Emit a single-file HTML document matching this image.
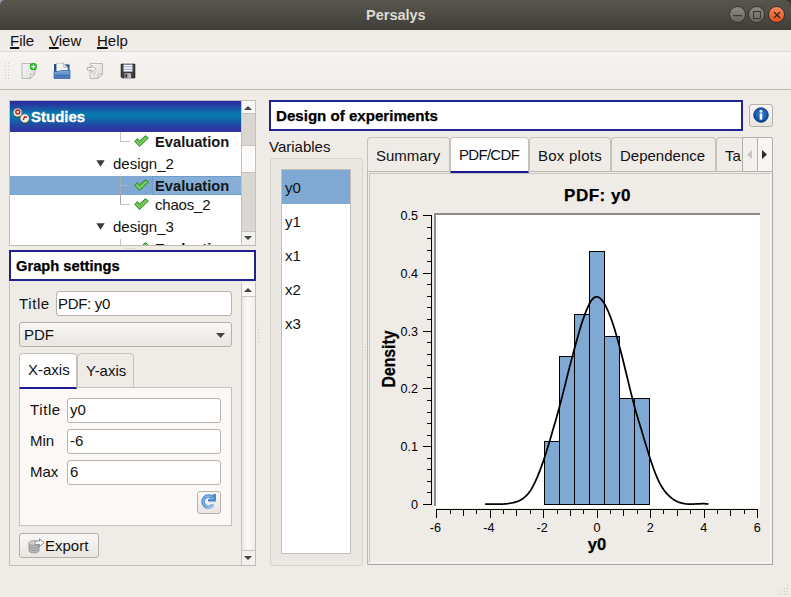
<!DOCTYPE html>
<html>
<head>
<meta charset="utf-8">
<title>Persalys</title>
<style>
html,body{margin:0;padding:0;}
body{width:791px;height:597px;overflow:hidden;background:#efebe7;font-family:"Liberation Sans",sans-serif;font-size:15px;color:#111;position:relative;}
.abs{position:absolute;box-sizing:border-box;}
.t{position:absolute;white-space:nowrap;line-height:1;margin-top:1px;}
.b{font-weight:bold;color:#000;-webkit-text-stroke:0.25px #000;}
#titlebar{left:0;top:0;width:791px;height:30px;background:linear-gradient(#58554d 0%,#504d46 40%,#3f3e39 100%);border-top-left-radius:5px;border-top-right-radius:7px;}
#titlebar .t{color:#dfdbd2;font-weight:bold;font-size:14.5px;}
.wb{position:absolute;width:17px;height:17px;border-radius:50%;box-sizing:border-box;border:1px solid #33322e;}
.input{position:absolute;box-sizing:border-box;background:#fff;border:1px solid #b8b3ac;border-radius:3px;}
.btn{position:absolute;box-sizing:border-box;border:1px solid #b5b0a9;border-radius:3px;background:linear-gradient(#f9f8f6,#e9e5e0);}
.tab{position:absolute;box-sizing:border-box;border:1px solid #c6c1ba;border-bottom:none;border-radius:4px 4px 0 0;background:#efebe7;}
.tab.sel{background:#fff;border-bottom:2px solid #1c1c8e;}
.sbar{position:absolute;box-sizing:border-box;background:#d8d5d0;border:1px solid #c3beb8;}
.line{position:absolute;background:#c4c4c4;}
#gsp .t{margin-top:-1px;}
u{text-decoration-thickness:1.5px;text-underline-offset:0.5px;}
.tb{-webkit-text-stroke:0;color:#151515;}
</style>
</head>
<body>
<!-- title bar -->
<div class="abs" style="left:780px;top:0;width:11px;height:10px;background:#36352f;"></div>
<div class="abs" style="left:0;top:0;width:4px;height:4px;background:#8d9ab0;"></div>
<div id="titlebar" class="abs">
  <div class="t" style="left:366px;top:7px;">Persalys</div>
  <div class="wb" style="left:729px;top:6px;background:linear-gradient(#8d8a83,#69665f);"></div>
  <div class="wb" style="left:748px;top:6px;background:linear-gradient(#8d8a83,#69665f);"></div>
  <div class="wb" style="left:768px;top:6px;background:linear-gradient(#f28a62,#e2521b);border-color:#3a2a22;"></div>
  <svg class="abs" style="left:728px;top:5px;" width="60" height="20" viewBox="728 5 60 20">
    <rect x="733" y="15" width="9" height="1.2" fill="#3b3a36"/>
    <rect x="753.5" y="11.5" width="7" height="7" fill="none" stroke="#3b3a36" stroke-width="1.1"/>
    <path d="M774 12 L780 18 M780 12 L774 18" stroke="#3a2410" stroke-width="1.3" fill="none"/>
  </svg>
</div>
<!-- menu bar -->
<div class="t" style="left:10px;top:32px;"><u>F</u>ile</div>
<div class="t" style="left:49px;top:32px;"><u>V</u>iew</div>
<div class="t" style="left:97px;top:32px;"><u>H</u>elp</div>
<!-- toolbar -->
<div class="abs" id="toolbar" style="left:0;top:51px;width:791px;height:39px;background:linear-gradient(#f6f3f0,#f1eeea);border-top:1px solid #dfdbd6;border-bottom:1px solid #bdb8b1;"></div>


<!-- toolbar handle -->
<svg class="abs" style="left:4px;top:62px;" width="7" height="18" viewBox="0 0 7 18">
  <g fill="#cfcbc5">
    <rect x="1" y="1" width="1" height="1"/><rect x="4" y="1" width="1" height="1"/>
    <rect x="1" y="4" width="1" height="1"/><rect x="4" y="4" width="1" height="1"/>
    <rect x="1" y="7" width="1" height="1"/><rect x="4" y="7" width="1" height="1"/>
    <rect x="1" y="10" width="1" height="1"/><rect x="4" y="10" width="1" height="1"/>
    <rect x="1" y="13" width="1" height="1"/><rect x="4" y="13" width="1" height="1"/>
    <rect x="1" y="16" width="1" height="1"/><rect x="4" y="16" width="1" height="1"/>
  </g>
</svg>
<!-- new -->
<svg class="abs" style="left:20px;top:62px;" width="18" height="18" viewBox="0 0 18 18">
  <defs><linearGradient id="pg" x1="0" y1="0" x2="1" y2="1"><stop offset="0" stop-color="#f6f6f6"/><stop offset="1" stop-color="#dcdcdc"/></linearGradient></defs>
  <path d="M2 1.5 L15 1.5 L15 12 L10.5 16.5 L2 16.5 Z" fill="url(#pg)" stroke="#b9b9b9" stroke-width="1"/>
  <path d="M15 12 L10.5 16.5 L10.8 12.3 Z" fill="#fafafa" stroke="#a8a8a8" stroke-width="0.8"/>
  <circle cx="13.4" cy="4.7" r="3.6" fill="#22ad22"/>
  <path d="M11.3 4.7 H15.5 M13.4 2.6 V6.8" stroke="#fff" stroke-width="1.3"/>
</svg>
<!-- open -->
<svg class="abs" style="left:53px;top:62px;" width="18" height="18" viewBox="0 0 18 18">
  <defs><linearGradient id="fo" x1="0" y1="0" x2="0" y2="1"><stop offset="0" stop-color="#82aee0"/><stop offset="0.5" stop-color="#5b8ccb"/><stop offset="1" stop-color="#4373b3"/></linearGradient></defs>
  <path d="M1 2 L16.5 2.5 L16.5 16 L1 16 Z" fill="#1d4f91"/>
  <path d="M3.5 1.2 L10.5 1.2 L14.8 5.5 L14.8 11 L3.5 11 Z" fill="#f2f2f2" stroke="#b5b5b5" stroke-width="0.7"/>
  <path d="M10.5 1.2 L14.8 5.5 L10.7 5.3 Z" fill="#e0e0e0" stroke="#9a9a9a" stroke-width="0.6"/>
  <path d="M1 9.5 L6 9.5 L7.5 8.5 L17 8.5 L17 16.5 L1 16.5 Z" fill="url(#fo)" stroke="#3a69a8" stroke-width="0.8"/>
  <rect x="1.5" y="13" width="15" height="1" fill="#3f6fb0"/>
</svg>
<!-- import -->
<svg class="abs" style="left:86px;top:62px;" width="18" height="18" viewBox="0 0 18 18">
  <path d="M4 1.5 L16.5 1.5 L16.5 12 L12 16.5 L4 16.5 Z" fill="url(#pg)" stroke="#bdbdbd" stroke-width="1"/>
  <path d="M16.5 12 L12 16.5 L12.3 12.3 Z" fill="#fafafa" stroke="#a8a8a8" stroke-width="0.8"/>
  <path d="M1.2 5.5 L5.8 5.5 L5.8 3.2 L9.8 6.8 L5.8 10.4 L5.8 8.1 L1.2 8.1 Z" fill="#fbfbfb" stroke="#aaaaaa" stroke-width="0.9"/>
  <path d="M6.5 10.5 L8 12.5 L10 9.5" fill="none" stroke="#c4c4c4" stroke-width="0.9"/>
</svg>
<!-- save -->
<svg class="abs" style="left:119px;top:62px;" width="18" height="18" viewBox="0 0 18 18">
  <path d="M2 2 L16 2 L16 16 L3.2 16 L2 14.8 Z" fill="#3b3b3d" stroke="#2a2a2c" stroke-width="0.6"/>
  <rect x="4.5" y="2.6" width="9" height="7" fill="#f4f6f9"/>
  <rect x="5" y="4.2" width="8" height="1" fill="#8fb0d8"/>
  <rect x="5" y="6.8" width="8" height="1" fill="#8fb0d8"/>
  <rect x="5.5" y="11.2" width="6.6" height="4.8" fill="#b9b9b9"/>
  <rect x="6.3" y="12" width="2" height="3.6" fill="#3b3b3d"/>
</svg>

<!-- studies tree -->
<div class="abs" id="tree" style="left:9px;top:100px;width:247px;height:146px;background:#fff;border:1px solid #c3beb8;overflow:hidden;">
  <!-- header -->
  <div class="abs" style="left:0;top:0;width:231px;height:31px;background:linear-gradient(#2c2c9c 0%,#2a32a0 8%,#1a55a6 24%,#0878ae 40%,#0878ae 50%,#1a55a6 70%,#2e36a0 90%,#3232a0 100%);"></div>
  <svg class="abs" style="left:2px;top:5px;" width="20" height="20" viewBox="0 0 20 20">
    <circle cx="5.6" cy="7.6" r="4" fill="#2c3a14"/>
    <circle cx="5.6" cy="6.6" r="4" fill="#f4f1e6" stroke="#b9b89a" stroke-width="0.6"/>
    <circle cx="5.8" cy="6" r="2" fill="none" stroke="#d01010" stroke-width="1.3"/>
    <circle cx="12.8" cy="13.4" r="4.2" fill="#2c3a14"/>
    <circle cx="12.8" cy="12.4" r="4.2" fill="#f4f1e6" stroke="#b9b89a" stroke-width="0.6"/>
    <path d="M11.3 14 L12.5 10.8 L15 11.3" fill="none" stroke="#d01010" stroke-width="1.4"/>
  </svg>
  <div class="t b" style="left:21px;top:7px;color:#fff;font-size:15px;-webkit-text-stroke:0.3px #fff;">Studies</div>
  <!-- rows -->
  <div class="abs" style="left:0;top:75px;width:231px;height:19px;background:#7fa9d3;"></div>
  <div class="abs" style="left:142px;top:75px;width:89px;height:19px;background:#86aed6;border:1px solid #6f9cc8;border-right:none;"></div>
  <!-- branch lines -->
  <div class="line" style="left:110px;top:31px;width:1px;height:10px;"></div>
  <div class="line" style="left:110px;top:40px;width:10px;height:1px;"></div>
  <div class="line" style="left:110px;top:75px;width:1px;height:29px;background:#a9a9a9;"></div>
  <div class="line" style="left:110px;top:84px;width:10px;height:1px;background:#9fb4c8;"></div>
  <div class="line" style="left:110px;top:103px;width:10px;height:1px;"></div>
  <div class="line" style="left:110px;top:138px;width:1px;height:8px;"></div>
  <!-- arrows -->
  <svg class="abs" style="left:86px;top:59px;" width="9" height="7" viewBox="0 0 9 7"><path d="M0.3 0.3 L8.7 0.3 L4.5 6.8 Z" fill="#3a3a3a"/></svg>
  <svg class="abs" style="left:86px;top:122px;" width="9" height="7" viewBox="0 0 9 7"><path d="M0.3 0.3 L8.7 0.3 L4.5 6.8 Z" fill="#3a3a3a"/></svg>
  <!-- checks -->
  <svg class="abs chk" style="left:124px;top:34px;" width="15" height="12" viewBox="0 0 15 12"><path d="M0.7 6.3 L3.4 3.6 L5.6 5.9 L11.5 0.6 L14.3 3.1 L5.6 11.5 Z" fill="#62bd48" stroke="#2f8a30" stroke-width="1"/><path d="M2.4 6.2 L5.6 9.3 L12.6 2.6" fill="none" stroke="#a6e08a" stroke-width="1" opacity="0.8"/></svg>
  <svg class="abs chk" style="left:124px;top:78px;" width="15" height="12" viewBox="0 0 15 12"><path d="M0.7 6.3 L3.4 3.6 L5.6 5.9 L11.5 0.6 L14.3 3.1 L5.6 11.5 Z" fill="#62bd48" stroke="#2f8a30" stroke-width="1"/><path d="M2.4 6.2 L5.6 9.3 L12.6 2.6" fill="none" stroke="#a6e08a" stroke-width="1" opacity="0.8"/></svg>
  <svg class="abs chk" style="left:124px;top:97px;" width="15" height="12" viewBox="0 0 15 12"><path d="M0.7 6.3 L3.4 3.6 L5.6 5.9 L11.5 0.6 L14.3 3.1 L5.6 11.5 Z" fill="#62bd48" stroke="#2f8a30" stroke-width="1"/><path d="M2.4 6.2 L5.6 9.3 L12.6 2.6" fill="none" stroke="#a6e08a" stroke-width="1" opacity="0.8"/></svg>
  <svg class="abs chk" style="left:124px;top:141px;" width="15" height="12" viewBox="0 0 15 12"><path d="M0.7 6.3 L3.4 3.6 L5.6 5.9 L11.5 0.6 L14.3 3.1 L5.6 11.5 Z" fill="#62bd48" stroke="#2f8a30" stroke-width="1"/><path d="M2.4 6.2 L5.6 9.3 L12.6 2.6" fill="none" stroke="#a6e08a" stroke-width="1" opacity="0.8"/></svg>
  <!-- labels -->
  <div class="t b tb" style="left:145px;top:33px;font-size:14.7px;">Evaluation</div>
  <div class="t" style="left:103px;top:54px;">design_2</div>
  <div class="t b tb" style="left:145px;top:77px;font-size:14.7px;">Evaluation</div>
  <div class="t" style="left:145px;top:95px;letter-spacing:-0.2px;">chaos_2</div>
  <div class="t" style="left:103px;top:117px;">design_3</div>
  <div class="t b tb" style="left:145px;top:140px;font-size:14.7px;">Evaluation</div>
  <!-- scrollbar -->
  <div class="abs" style="left:231px;top:0;width:14px;height:144px;background:#dad7d2;border-left:1px solid #c6c2bc;"></div>
  <div class="abs" style="left:232px;top:0;width:13px;height:13px;background:#f9f8f6;border-bottom:1px solid #c6c2bc;"></div>
  <div class="abs" style="left:232px;top:44px;width:13px;height:28px;background:#fcfbfa;border-top:1px solid #c6c2bc;border-bottom:1px solid #c6c2bc;"></div>
  <div class="abs" style="left:232px;top:130px;width:13px;height:14px;background:#f3f1ee;border-top:1px solid #c6c2bc;"></div>
  <svg class="abs" style="left:234px;top:5px;" width="8" height="4" viewBox="0 0 9 5" preserveAspectRatio="none"><path d="M0 5 L4.5 0 L9 5 Z" fill="#454545"/></svg>
  <svg class="abs" style="left:234px;top:135px;" width="8" height="4" viewBox="0 0 9 5" preserveAspectRatio="none"><path d="M0 0 L4.5 5 L9 0 Z" fill="#454545"/></svg>
</div>

<!-- graph settings -->
<div class="abs" style="left:9px;top:250px;width:247px;height:31px;background:#fff;border:2px solid #22228f;border-radius:0;"></div>
<div class="t b" style="left:16px;top:258px;font-size:14.7px;">Graph settings</div>


<!-- graph settings panel -->
<div class="abs" id="gsp" style="left:9px;top:282px;width:247px;height:284px;border:1px solid #c3beb8;border-top-color:#efebe7;background:#efebe7;">
  <!-- scrollbar -->
  <div class="abs" style="left:231px;top:0;width:14px;height:282px;background:linear-gradient(90deg,#ebe8e4,#fbfaf9 45%,#f1eeeb);border-left:1px solid #c6c2bc;"></div>
  <div class="abs" style="left:232px;top:0;width:13px;height:14px;background:#f8f7f5;border-bottom:1px solid #c9c5bf;"></div>
  <div class="abs" style="left:232px;top:267px;width:13px;height:15px;background:#f3f1ee;border-top:1px solid #c6c2bc;"></div>
  <svg class="abs" style="left:234px;top:5px;" width="8" height="4" viewBox="0 0 9 5" preserveAspectRatio="none"><path d="M0 5 L4.5 0 L9 5 Z" fill="#454545"/></svg>
  <svg class="abs" style="left:234px;top:273px;" width="8" height="4" viewBox="0 0 9 5" preserveAspectRatio="none"><path d="M0 0 L4.5 5 L9 0 Z" fill="#454545"/></svg>

  <div class="t" style="left:9px;top:14px;letter-spacing:0.6px;">Title</div>
  <div class="input" style="left:46px;top:8px;width:176px;height:25px;"></div>
  <div class="t" style="left:48px;top:14px;letter-spacing:-0.3px;">PDF: y0</div>

  <div class="btn" style="left:9px;top:39px;width:213px;height:25px;"></div>
  <div class="t" style="left:14px;top:45px;">PDF</div>
  <svg class="abs" style="left:206px;top:50px;" width="9" height="5" viewBox="0 0 9 5"><path d="M0 0 L4.5 5 L9 0 Z" fill="#454545"/></svg>

  <!-- tabs -->
  <div class="abs" style="left:9px;top:104px;width:213px;height:139px;background:#fbf8f5;border:1px solid #c6c1ba;"></div>
  <div class="tab" style="left:67px;top:70px;width:57px;height:35px;border-bottom:1px solid #c6c1ba;"></div>
  <div class="tab sel" style="left:9px;top:70px;width:58px;height:36px;"></div>
  <div class="t" style="left:18px;top:80px;">X-axis</div>
  <div class="t" style="left:76px;top:81px;">Y-axis</div>

  <div class="t" style="left:20px;top:120px;letter-spacing:0.6px;">Title</div>
  <div class="input" style="left:57px;top:115px;width:154px;height:25px;"></div>
  <div class="t" style="left:60px;top:120px;">y0</div>
  <div class="t" style="left:20px;top:151px;">Min</div>
  <div class="input" style="left:57px;top:146px;width:154px;height:25px;"></div>
  <div class="t" style="left:60px;top:151px;">-6</div>
  <div class="t" style="left:20px;top:182px;">Max</div>
  <div class="input" style="left:57px;top:177px;width:154px;height:25px;"></div>
  <div class="t" style="left:60px;top:182px;">6</div>

  <div class="btn" style="left:187px;top:208px;width:24px;height:23px;"></div>
  <svg class="abs" style="left:187px;top:208px;" width="24" height="23" viewBox="0 0 24 23">
    <defs><linearGradient id="rf" x1="0" y1="0" x2="1" y2="1"><stop offset="0" stop-color="#4a88d4"/><stop offset="0.6" stop-color="#5b95da"/><stop offset="1" stop-color="#9cc0ea"/></linearGradient></defs>
    <path d="M15.28 6.51 A5.5 5.5 0 1 0 15.28 14.69" fill="none" stroke="url(#rf)" stroke-width="3.7" stroke-linecap="round"/>
    <path d="M15.28 6.51 A5.5 5.5 0 1 0 15.28 14.69" fill="none" stroke="#a9c9ee" stroke-width="1.2" opacity="0.7"/>
    <path d="M18.9 2.8 L18.9 10.6 L11 10.6 L11 8.2 L14 7.6 L15.5 3.6 Z" fill="#4583d1"/>
    <path d="M16.6 5.2 L16.6 8.6 L13 8.6 Z" fill="#86b2e6"/>
  </svg>

  <div class="btn" style="left:9px;top:250px;width:80px;height:25px;"></div>
  <svg class="abs" style="left:18px;top:255px;" width="17" height="16" viewBox="0 0 17 16">
    <path d="M1 5 L1 12.5 A5 2.3 0 0 0 11 12.5 L11 5 Z" fill="#b9b9b9" stroke="#8a8a8a" stroke-width="0.7"/>
    <ellipse cx="6" cy="5" rx="5" ry="2.2" fill="#dedede" stroke="#8a8a8a" stroke-width="0.7"/>
    <path d="M1 7.6 A5 2.3 0 0 0 11 7.6 M1 10.1 A5 2.3 0 0 0 11 10.1" fill="none" stroke="#8a8a8a" stroke-width="0.7"/>
    <path d="M4 2.3 L4 7.3" stroke="#999" stroke-width="0.5"/>
    <path d="M7 3 L11.5 3 L11.5 0.8 L16 4.8 L11.5 8.8 L11.5 6.6 L7 6.6 Z" fill="#fafafa" stroke="#777" stroke-width="0.8"/>
  </svg>
  <div class="t" style="left:35px;top:256px;">Export</div>
</div>

<!-- design of experiments -->
<div class="abs" style="left:269px;top:100px;width:474px;height:31px;background:#fff;border:2px solid #22228f;border-radius:0;"></div>
<div class="t b" style="left:276px;top:107px;font-size:15.1px;">Design of experiments</div>

<!-- info button -->
<div class="btn" style="left:749px;top:104px;width:24px;height:23px;"></div>
<svg class="abs" style="left:753px;top:107px;" width="16" height="16" viewBox="0 0 16 16">
  <defs><radialGradient id="ig" cx="0.5" cy="0.45" r="0.55"><stop offset="0" stop-color="#3a86d2"/><stop offset="0.6" stop-color="#1f62b4"/><stop offset="1" stop-color="#0b3f8a"/></radialGradient></defs><circle cx="8" cy="8" r="7.3" fill="url(#ig)" stroke="#0d3a80" stroke-width="0.8"/>
  <circle cx="8" cy="4.3" r="1.4" fill="#fff"/>
  <rect x="6.7" y="6.6" width="2.6" height="6" fill="#fff"/>
</svg>

<!-- variables -->
<div class="t" style="left:269px;top:138px;">Variables</div>
<div class="abs" style="left:270px;top:158px;width:93px;height:408px;border:1px solid #d5d1cb;border-radius:3px;background:#ebe7e3;"></div>
<div class="abs" style="left:281px;top:169px;width:70px;height:385px;background:#fff;border:1px solid #c3beb8;"></div>
<div class="abs" style="left:282px;top:170px;width:68px;height:34px;background:#7fa9d3;"></div>
<div class="t" style="left:285px;top:179px;">y0</div>
<div class="t" style="left:285px;top:213px;">y1</div>
<div class="t" style="left:285px;top:247px;">x1</div>
<div class="t" style="left:285px;top:281px;">x2</div>
<div class="t" style="left:285px;top:315px;">x3</div>

<!-- right tabs -->
<div class="abs" style="left:367px;top:171px;width:406px;height:394px;border:1px solid #bcb7b0;border-right-color:#aea9a2;border-bottom-color:#aea9a2;background:#efebe7;"></div>
<div class="abs" style="left:369px;top:173px;width:402px;height:390px;border:1px solid #fbfaf9;border-top-color:#c9c5bf;border-left-color:#c9c5bf;"></div>
<div class="tab" style="left:367px;top:137px;width:83px;height:35px;border-bottom:1px solid #bcb7b0;"></div>
<div class="tab" style="left:529px;top:137px;width:82px;height:35px;border-bottom:1px solid #bcb7b0;"></div>
<div class="tab" style="left:611px;top:137px;width:105px;height:35px;border-bottom:1px solid #bcb7b0;"></div>
<div class="tab" style="left:716px;top:137px;width:27px;border-right:none;border-radius:4px 0 0 0;height:35px;border-bottom:1px solid #bcb7b0;"></div>
<div class="tab sel" style="left:450px;top:137px;width:79px;height:36px;"></div>
<div class="t" style="left:376px;top:147px;">Summary</div>
<div class="t" style="left:459px;top:146px;letter-spacing:-0.7px;">PDF/CDF</div>
<div class="t" style="left:538px;top:147px;letter-spacing:0.25px;">Box plots</div>
<div class="t" style="left:620px;top:147px;">Dependence</div>
<div class="t" style="left:725px;top:147px;">Ta</div>
<div class="btn" style="left:742px;top:137px;width:16px;height:35px;border-radius:2px 0 0 2px;background:#f3f0ed;"></div>
<div class="btn" style="left:757px;top:137px;width:16px;height:35px;border-radius:0 2px 2px 0;background:#f8f6f4;"></div>
<svg class="abs" style="left:747px;top:150px;" width="5" height="9" viewBox="0 0 5 9"><path d="M5 0 L0 4.5 L5 9 Z" fill="#c9c6c1"/></svg>
<svg class="abs" style="left:762px;top:150px;" width="5" height="9" viewBox="0 0 5 9"><path d="M0 0 L5 4.5 L0 9 Z" fill="#2a2a2a"/></svg>

<svg class="abs" style="left:778px;top:585px;" width="12" height="12" viewBox="0 0 12 12"><g fill="#cbc7c1">
<rect x="9" y="0" width="1" height="1"/><rect x="6" y="3" width="1" height="1"/><rect x="9" y="3" width="1" height="1"/>
<rect x="3" y="6" width="1" height="1"/><rect x="6" y="6" width="1" height="1"/><rect x="9" y="6" width="1" height="1"/>
<rect x="0" y="9" width="1" height="1"/><rect x="3" y="9" width="1" height="1"/><rect x="6" y="9" width="1" height="1"/><rect x="9" y="9" width="1" height="1"/></g></svg>
<svg class="abs" style="left:257px;top:325px;" width="3" height="20" viewBox="0 0 3 20"><g fill="#cdc9c3"><rect x="1" y="1" width="1" height="1"/><rect x="1" y="4" width="1" height="1"/><rect x="1" y="7" width="1" height="1"/><rect x="1" y="10" width="1" height="1"/><rect x="1" y="13" width="1" height="1"/><rect x="1" y="16" width="1" height="1"/></g></svg>
<svg class="abs" style="left:364px;top:340px;" width="3" height="20" viewBox="0 0 3 20"><g fill="#cdc9c3"><rect x="1" y="1" width="1" height="1"/><rect x="1" y="4" width="1" height="1"/><rect x="1" y="7" width="1" height="1"/><rect x="1" y="10" width="1" height="1"/><rect x="1" y="13" width="1" height="1"/><rect x="1" y="16" width="1" height="1"/></g></svg>
<svg class="abs" style="left:124px;top:247px;" width="14" height="3" viewBox="0 0 14 3"><g fill="#cdc9c3"><rect x="1" y="1" width="1" height="1"/><rect x="3" y="1" width="1" height="1"/><rect x="5" y="1" width="1" height="1"/><rect x="7" y="1" width="1" height="1"/><rect x="9" y="1" width="1" height="1"/><rect x="11" y="1" width="1" height="1"/></g></svg>
<!-- plot -->
<svg class="abs" id="plot" style="left:370px;top:174px;" width="400" height="388" viewBox="370 174 400 388" font-family="'Liberation Sans', sans-serif">
<rect x="434" y="213" width="326" height="295" fill="#fff"/>
<rect x="434" y="213" width="326" height="2" fill="#8e8e89"/>
<rect x="434" y="213" width="2" height="293" fill="#8e8e89"/>
<rect x="544.5" y="441.5" width="15.0" height="63.0" fill="#7fa9d3" stroke="#000" stroke-width="1"/>
<rect x="559.5" y="356.5" width="15.0" height="148.0" fill="#7fa9d3" stroke="#000" stroke-width="1"/>
<rect x="574.5" y="314.5" width="15.0" height="190.0" fill="#7fa9d3" stroke="#000" stroke-width="1"/>
<rect x="589.5" y="251.5" width="15.0" height="253.0" fill="#7fa9d3" stroke="#000" stroke-width="1"/>
<rect x="604.5" y="336.5" width="15.0" height="168.0" fill="#7fa9d3" stroke="#000" stroke-width="1"/>
<rect x="619.5" y="398.5" width="15.0" height="106.0" fill="#7fa9d3" stroke="#000" stroke-width="1"/>
<rect x="634.5" y="398.5" width="15.0" height="106.0" fill="#7fa9d3" stroke="#000" stroke-width="1"/>
<polyline points="485.1,504.0 486.5,504.0 487.9,504.0 489.3,504.0 490.7,504.0 492.1,504.0 493.5,504.0 494.9,504.0 496.3,504.0 497.7,504.0 499.2,504.0 500.6,504.0 502.0,504.0 503.4,504.0 504.8,503.9 506.2,503.8 507.6,503.6 509.0,503.5 510.4,503.2 511.8,503.0 513.2,502.7 514.6,502.3 516.0,501.9 517.4,501.5 518.8,500.9 520.2,500.2 521.6,499.5 523.0,498.5 524.4,497.4 525.8,496.2 527.3,494.7 528.7,493.0 530.1,491.1 531.5,488.9 532.9,486.4 534.3,483.7 535.7,480.7 537.1,477.6 538.5,474.2 539.9,470.6 541.3,466.8 542.7,462.9 544.1,458.8 545.5,454.5 546.9,450.1 548.3,445.5 549.7,440.9 551.1,436.2 552.5,431.3 553.9,426.5 555.4,421.5 556.8,416.5 558.2,411.5 559.6,406.3 561.0,401.0 562.4,395.6 563.8,390.1 565.2,384.5 566.6,378.9 568.0,373.3 569.4,367.8 570.8,362.4 572.2,357.1 573.6,351.8 575.0,346.7 576.4,341.6 577.8,336.7 579.2,331.8 580.6,327.1 582.0,322.6 583.5,318.3 584.9,314.3 586.3,310.6 587.7,307.3 589.1,304.3 590.5,301.8 591.9,299.8 593.3,298.3 594.7,297.3 596.1,296.9 597.5,296.9 598.9,297.4 600.3,298.4 601.7,299.8 603.1,301.6 604.5,303.8 605.9,306.4 607.3,309.3 608.7,312.5 610.1,316.1 611.6,320.0 613.0,324.1 614.4,328.5 615.8,333.2 617.2,338.0 618.6,343.1 620.0,348.4 621.4,353.8 622.8,359.3 624.2,365.0 625.6,370.8 627.0,376.6 628.4,382.4 629.8,388.1 631.2,393.8 632.6,399.4 634.0,404.7 635.4,409.9 636.8,414.8 638.2,419.6 639.7,424.2 641.1,428.8 642.5,433.5 643.9,438.2 645.3,442.9 646.7,447.6 648.1,452.1 649.5,456.6 650.9,460.9 652.3,465.0 653.7,469.0 655.1,472.7 656.5,476.2 657.9,479.4 659.3,482.3 660.7,484.9 662.1,487.3 663.5,489.4 664.9,491.3 666.3,493.1 667.8,494.6 669.2,496.0 670.6,497.3 672.0,498.4 673.4,499.4 674.8,500.3 676.2,501.1 677.6,501.7 679.0,502.3 680.4,502.7 681.8,503.1 683.2,503.4 684.6,503.7 686.0,503.9 687.4,504.0 688.8,504.0 690.2,504.0 691.6,504.0 693.0,504.0 694.4,504.0 695.9,503.9 697.3,503.9 698.7,503.8 700.1,503.8 701.5,503.7 702.9,503.7 704.3,503.7 705.7,503.8 707.1,503.9 708.5,504.0" fill="none" stroke="#000" stroke-width="1.75" stroke-linejoin="round"/>
<g shape-rendering="crispEdges" fill="#000">
<rect x="431" y="215" width="1" height="290"/>
<rect x="423" y="215" width="8" height="1"/>
<rect x="427" y="227" width="4" height="1"/>
<rect x="427" y="238" width="4" height="1"/>
<rect x="427" y="250" width="4" height="1"/>
<rect x="427" y="261" width="4" height="1"/>
<rect x="423" y="273" width="8" height="1"/>
<rect x="427" y="284" width="4" height="1"/>
<rect x="427" y="296" width="4" height="1"/>
<rect x="427" y="307" width="4" height="1"/>
<rect x="427" y="319" width="4" height="1"/>
<rect x="423" y="331" width="8" height="1"/>
<rect x="427" y="342" width="4" height="1"/>
<rect x="427" y="354" width="4" height="1"/>
<rect x="427" y="365" width="4" height="1"/>
<rect x="427" y="377" width="4" height="1"/>
<rect x="423" y="388" width="8" height="1"/>
<rect x="427" y="400" width="4" height="1"/>
<rect x="427" y="412" width="4" height="1"/>
<rect x="427" y="423" width="4" height="1"/>
<rect x="427" y="435" width="4" height="1"/>
<rect x="423" y="446" width="8" height="1"/>
<rect x="427" y="458" width="4" height="1"/>
<rect x="427" y="469" width="4" height="1"/>
<rect x="427" y="481" width="4" height="1"/>
<rect x="427" y="492" width="4" height="1"/>
<rect x="423" y="504" width="8" height="1"/>
<rect x="436" y="509" width="322" height="1"/>
<rect x="436" y="510" width="1" height="8"/>
<rect x="450" y="510" width="1" height="4"/>
<rect x="463" y="510" width="1" height="6"/>
<rect x="476" y="510" width="1" height="4"/>
<rect x="490" y="510" width="1" height="8"/>
<rect x="503" y="510" width="1" height="4"/>
<rect x="516" y="510" width="1" height="6"/>
<rect x="530" y="510" width="1" height="4"/>
<rect x="543" y="510" width="1" height="8"/>
<rect x="557" y="510" width="1" height="4"/>
<rect x="570" y="510" width="1" height="6"/>
<rect x="583" y="510" width="1" height="4"/>
<rect x="597" y="510" width="1" height="8"/>
<rect x="610" y="510" width="1" height="4"/>
<rect x="623" y="510" width="1" height="6"/>
<rect x="637" y="510" width="1" height="4"/>
<rect x="650" y="510" width="1" height="8"/>
<rect x="663" y="510" width="1" height="4"/>
<rect x="677" y="510" width="1" height="6"/>
<rect x="690" y="510" width="1" height="4"/>
<rect x="704" y="510" width="1" height="8"/>
<rect x="717" y="510" width="1" height="4"/>
<rect x="730" y="510" width="1" height="6"/>
<rect x="744" y="510" width="1" height="4"/>
<rect x="757" y="510" width="1" height="8"/>
</g>
<g font-size="12.6px" fill="#000">
<text x="418" y="219.8" text-anchor="end">0.5</text>
<text x="418" y="277.8" text-anchor="end">0.4</text>
<text x="418" y="335.8" text-anchor="end">0.3</text>
<text x="418" y="392.8" text-anchor="end">0.2</text>
<text x="418" y="450.8" text-anchor="end">0.1</text>
<text x="418" y="508.8" text-anchor="end">0</text>
<text x="435.3" y="532" text-anchor="middle">-6</text>
<text x="488.8" y="532" text-anchor="middle">-4</text>
<text x="542.2" y="532" text-anchor="middle">-2</text>
<text x="596.9" y="532" text-anchor="middle">0</text>
<text x="650.3" y="532" text-anchor="middle">2</text>
<text x="703.7" y="532" text-anchor="middle">4</text>
<text x="757.2" y="532" text-anchor="middle">6</text>
</g>
<g fill="#000" stroke="#000" stroke-width="0.25" font-weight="bold">
<text x="597.5" y="200.5" text-anchor="middle" font-size="17px" letter-spacing="0.5">PDF: y0</text>
<text x="597" y="549.5" text-anchor="middle" font-size="16.5px">y0</text>
<text transform="translate(394.5,387.5) rotate(-90)" font-size="17.5px" textLength="57" lengthAdjust="spacingAndGlyphs">Density</text>
</g>
</svg>
</body>
</html>
